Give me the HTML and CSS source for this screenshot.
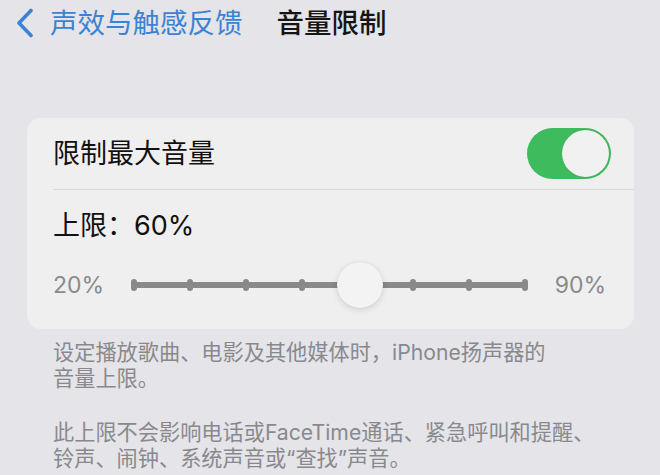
FILE: index.html
```html
<!DOCTYPE html>
<html lang="zh-CN">
<head>
<meta charset="utf-8">
<link rel="stylesheet" href="styles.css">
</head>
<body>
<header class="nav">
  <a class="back">
    <svg class="chev" width="20" height="30" viewBox="0 0 20 30"><path d="M16 2.5 L4 15 L16 27.5" fill="none" stroke="#3a83d3" stroke-width="3.6" stroke-linecap="round" stroke-linejoin="round"/></svg>
    <span class="back-text">声效与触感反馈</span>
  </a>
  <h1 class="title">音量限制</h1>
</header>

<section class="card">
  <div class="row row-toggle">
    <span class="label">限制最大音量</span>
    <span class="switch"><span class="knob"></span></span>
  </div>
  <div class="sep"></div>
  <div class="limit">上限：60%</div>
  <div class="slider">
    <span class="end">20%</span>
    <div class="track">
      <div class="line"></div>
      <div class="ticks">
        <i></i><i></i><i></i><i></i><i></i><i></i><i></i><i></i>
      </div>
      <div class="thumb"></div>
    </div>
    <span class="end end-right">90%</span>
  </div>
</section>

<p class="note">设定播放歌曲、电影及其他媒体时，iPhone扬声器的<br>音量上限。</p>
<p class="note note2">此上限不会影响电话或FaceTime通话、紧急呼叫和提醒、<br>铃声、闹钟、系统声音或“查找”声音。</p>
</body>
</html>
```

FILE: styles.css
```css
* { box-sizing: border-box; }
html, body { margin: 0; padding: 0; }
body {
  width: 660px;
  height: 475px;
  overflow: hidden;
  background: #e4e4e9;
  font-family: Inter, "Noto Sans CJK SC", sans-serif;
  color: #111;
}
.nav {
  display: flex;
  align-items: center;
  height: 45px;
  padding: 0 0 0 15px;
}
.back {
  display: flex;
  align-items: center;
  color: #3a83d3;
}
.chev { display: block; margin-top: 1px; }
.back-text {
  margin-left: 15px;
  font-size: 27.5px;
  line-height: 36px;
}
.title {
  margin: 0 0 0 34px;
  font-size: 27.5px;
  font-weight: 500;
  line-height: 36px;
  color: #151515;
}
.card {
  margin: 73px 26px 0 27px;
  background: #efefef;
  border-radius: 14px;
  padding-bottom: 21px;
}
.row-toggle {
  display: flex;
  align-items: center;
  justify-content: space-between;
  height: 71px;
  padding: 0 23px 0 26px;
}
.label {
  font-size: 27px;
  line-height: 36px;
}
.switch {
  position: relative;
  width: 84px;
  height: 51px;
  border-radius: 26px;
  background: #3dbb5d;
}
.knob {
  position: absolute;
  right: 2px;
  top: 2px;
  width: 47px;
  height: 47px;
  border-radius: 50%;
  background: #f1f1f1;
  box-shadow: 0 0 1px rgba(0,0,0,0.25);
}
.sep {
  height: 1px;
  margin-left: 26px;
  background: #d6d6d8;
}
.limit {
  padding: 18px 0 0 26px;
  font-size: 27px;
  line-height: 36px;
}
.slider {
  display: grid;
  grid-template-columns: 78px 397px 1fr;
  align-items: center;
  height: 46px;
  margin-top: 18px;
  padding: 0 28px 0 26px;
}
.end {
  font-size: 23px;
  color: #8a8a8a;
  line-height: 30px;
}
.end-right { text-align: right; }
.track {
  position: relative;
  height: 46px;
}
.line {
  position: absolute;
  left: 2px;
  right: 2px;
  top: 20px;
  height: 6px;
  background: #898989;
  border-radius: 3px;
}
.ticks {
  position: absolute;
  left: 0;
  right: 0;
  top: 17px;
  display: flex;
  justify-content: space-between;
}
.ticks i {
  display: block;
  width: 6px;
  height: 12px;
  border-radius: 3px;
  background: #898989;
}
.thumb {
  position: absolute;
  left: 206px;
  top: 0;
  width: 46px;
  height: 46px;
  border-radius: 50%;
  background: #f3f3f3;
  box-shadow: 0 2px 6px rgba(0,0,0,0.13), 0 0 1px rgba(0,0,0,0.12);
}
.note {
  margin: 10px 0 0 53px;
  font-size: 21.2px;
  line-height: 26px;
  color: #89898d;
}
.note2 { margin-top: 28px; }
```
